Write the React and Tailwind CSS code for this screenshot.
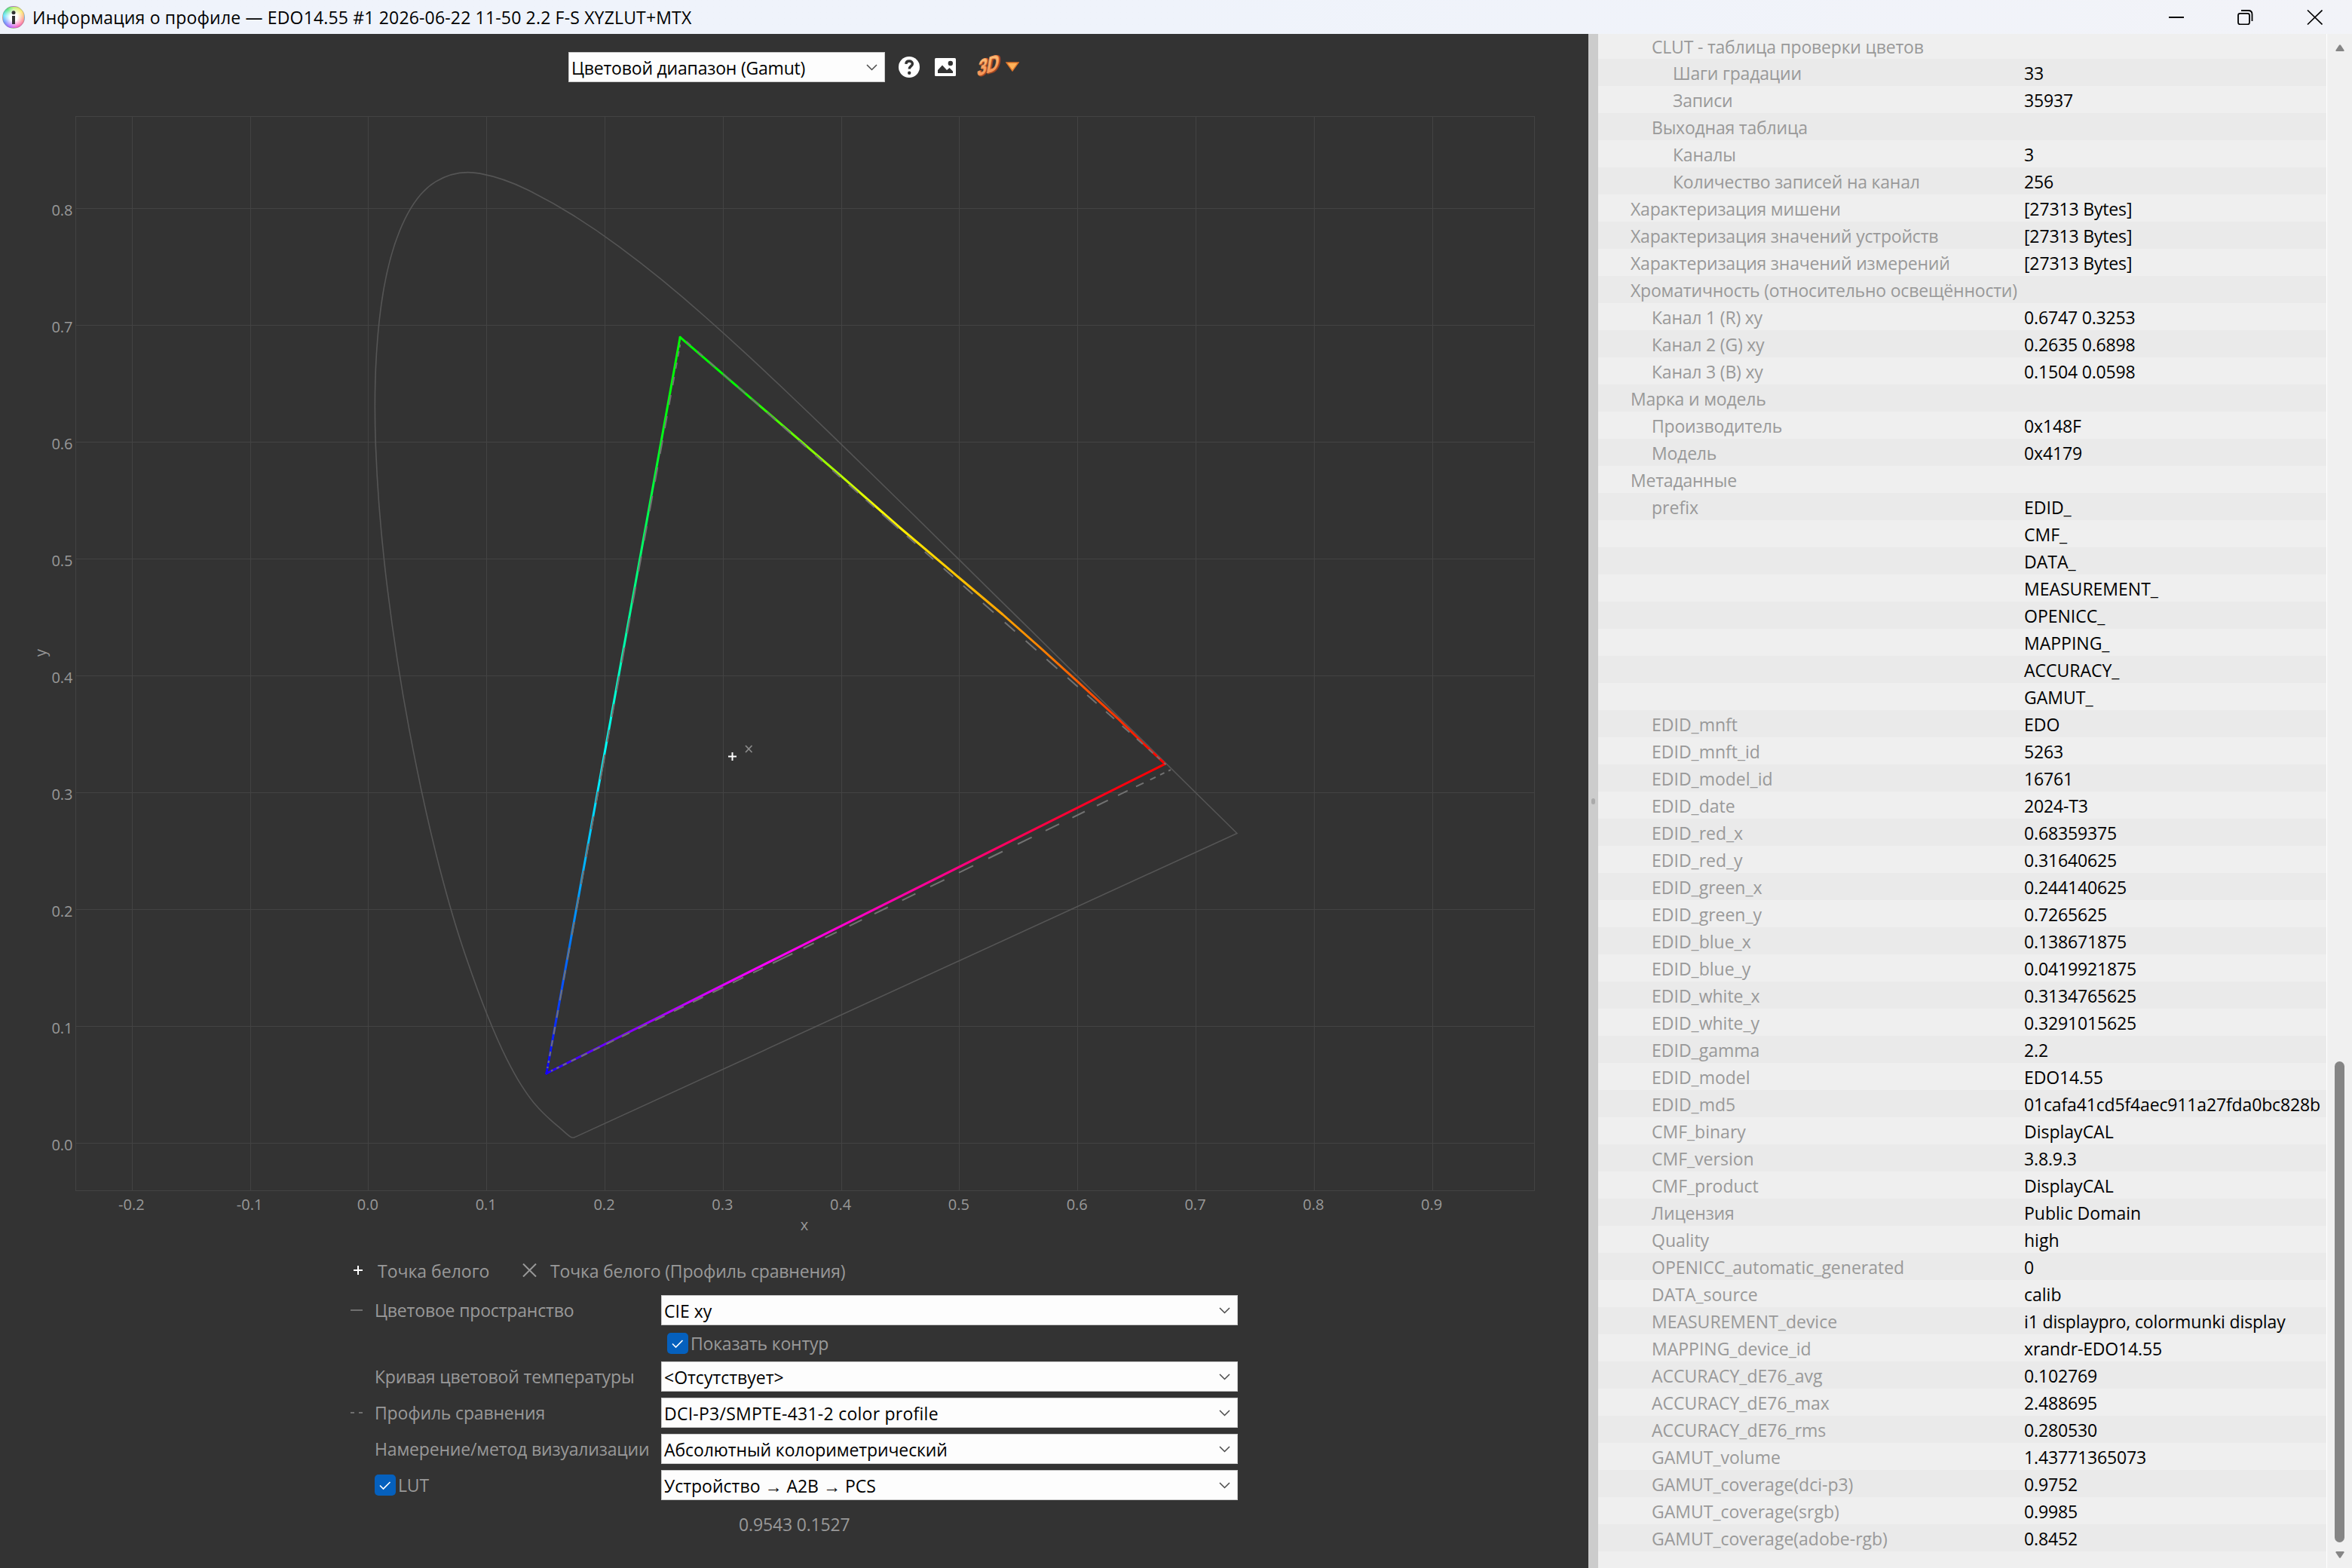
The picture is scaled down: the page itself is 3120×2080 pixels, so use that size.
import React from 'react'
import clsx from 'clsx'

const X0 = 488.9
const Y0 = 1516.6
const toX = (x) => X0 + x * 1568
const toY = (y) => Y0 - y * 1550

const LOCUS = [
  [0.1741, 0.005], [0.1733, 0.0048], [0.1714, 0.0051], [0.1689, 0.0069], [0.1644, 0.0109],
  [0.1566, 0.0177], [0.151, 0.0227], [0.144, 0.0297], [0.1355, 0.0399], [0.1241, 0.0578],
  [0.1096, 0.0868], [0.0913, 0.1327], [0.0687, 0.2007], [0.0454, 0.295], [0.0235, 0.4127],
  [0.0082, 0.5384], [0.0039, 0.6548], [0.0139, 0.7502], [0.0389, 0.812], [0.0743, 0.8338],
  [0.1142, 0.8262], [0.1547, 0.8059], [0.1929, 0.7816], [0.2296, 0.7543], [0.2658, 0.7243],
  [0.3016, 0.6923], [0.3373, 0.6589], [0.3731, 0.6245], [0.4087, 0.5896], [0.4441, 0.5547],
  [0.4788, 0.5202], [0.5125, 0.4866], [0.5448, 0.4544], [0.5752, 0.4242], [0.6029, 0.3965],
  [0.627, 0.3725], [0.6482, 0.3514], [0.6658, 0.334], [0.6915, 0.3083], [0.719, 0.2809],
  [0.7347, 0.2653],
]

// quadratic spline running through the midpoints of the samples
const locusPath = () => {
  const pts = LOCUS.map(([x, y]) => [toX(x), toY(y)])
  let d = `M${pts[0][0]} ${pts[0][1]}`
  for (let i = 1; i < pts.length - 1; i++) {
    const mx = (pts[i][0] + pts[i + 1][0]) / 2
    const my = (pts[i][1] + pts[i + 1][1]) / 2
    d += `Q${pts[i][0]} ${pts[i][1]} ${mx} ${my}`
  }
  const last = pts[pts.length - 1]
  return `${d}L${last[0]} ${last[1]}Z`
}

const X_TICKS = [-0.2, -0.1, 0, 0.1, 0.2, 0.3, 0.4, 0.5, 0.6, 0.7, 0.8, 0.9]
const Y_TICKS = [0, 0.1, 0.2, 0.3, 0.4, 0.5, 0.6, 0.7, 0.8]

const GREEN = [904, 447.3]
const RED = [1554, 1020.6]
const BLUE = [725, 1423.6]

// [start, end] of each dash along y
const GR_DASHES = [
  [453, 458], [466, 472], [480, 487], [496, 505], [513, 522], [529, 538], [547, 557], [565, 575],
  [584, 593], [604, 612], [624, 633], [643, 654], [663, 673], [682, 701], [711, 721], [732, 742],
  [754, 765], [777, 788], [800, 812.5], [825.5, 837.5], [850, 862.5], [874.5, 887], [899, 911],
  [922, 933], [944, 953.5], [963, 971.5], [980, 987], [994, 999], [1003.5, 1007], [1012, 1014],
]
const GB_DASHES = [
  [457, 461], [466, 473], [481, 489], [500, 511], [524, 537], [552, 568], [584, 602], [620, 639],
  [658, 678], [698, 717], [738, 758], [779, 800], [820, 840], [859, 879], [897, 916], [934, 951],
  [968, 984], [1001, 1034], [1050, 1065], [1083, 1100], [1119, 1137], [1155, 1173], [1190, 1207],
  [1223, 1240], [1257, 1273], [1287, 1300], [1313, 1327], [1340, 1350], [1362, 1372], [1380, 1388],
  [1395, 1401], [1407, 1410], [1415, 1417],
]
// these run along x
const RB_DASHES = [
  [1550, 1553], [1539, 1544.5], [1525.7, 1533], [1507, 1517], [1483, 1495.8], [1455, 1469.7],
  [1422.5, 1439], [1387, 1405], [1350, 1368.7], [1311, 1330], [1272, 1291], [1234, 1252.7],
  [1196.7, 1214.4], [1160, 1177.8], [1126.7, 1143.4], [1094.6, 1110], [1065.7, 1079.6],
  [1025, 1051.3], [999, 1012], [972, 986], [945.3, 959], [919, 932.5], [894, 907], [869, 881.5],
  [846.5, 858], [825, 835], [804.3, 814.3], [787, 795.5], [771, 778.8], [757.7, 763.8],
  [746.6, 751.6], [738.3, 741.6], [731, 733.3],
]

const alongY = (a, b, y) => a[0] + ((b[0] - a[0]) * (y - a[1])) / (b[1] - a[1])
const alongX = (a, b, x) => a[1] + ((b[1] - a[1]) * (x - a[0])) / (b[0] - a[0])

const dashPath = () =>
  [
    ...GR_DASHES.map(([s, e]) => `M${alongY(GREEN, RED, s)} ${s}L${alongY(GREEN, RED, e)} ${e}`),
    ...GB_DASHES.map(([s, e]) => `M${alongY(GREEN, BLUE, s)} ${s}L${alongY(GREEN, BLUE, e)} ${e}`),
    ...RB_DASHES.map(([s, e]) => `M${s} ${alongX(RED, BLUE, s)}L${e} ${alongX(RED, BLUE, e)}`),
  ].join('')

const Gradient = ({ id, from, to, stops }) => (
  <linearGradient id={id} gradientUnits="userSpaceOnUse" x1={from[0]} y1={from[1]} x2={to[0]} y2={to[1]}>
    {stops.map(([offset, color]) => (
      <stop key={offset} offset={offset} stopColor={color} />
    ))}
  </linearGradient>
)

const GamutChart = () => (
  <svg className="block h-[1541px] w-[2107px] shrink-0" viewBox="0 109 2107 1541">
    <defs>
      <Gradient id="gr" from={[902, 447]} to={[1545, 1013]} stops={[[0, '#00ff00'], [0.12, '#00ff00'], [0.41, '#ffff00'], [0.72, '#ff8c00'], [0.95, '#ff1800'], [1, '#ff0000']]} />
      <Gradient id="gb" from={[902, 447]} to={[725, 1424]} stops={[[0, '#00ff00'], [0.12, '#00ff10'], [0.35, '#00ff88'], [0.57, '#00ffff'], [0.8, '#0088ff'], [1, '#1000ff']]} />
      <Gradient id="rb" from={[1545, 1013]} to={[725, 1424]} stops={[[0, '#ff0000'], [0.08, '#ff0010'], [0.35, '#ff0088'], [0.64, '#ff00ff'], [0.75, '#d000ff'], [0.9, '#7000ff'], [1, '#2000ff']]} />
    </defs>
    <g stroke="#434343" strokeWidth="1" shapeRendering="crispEdges" fill="none">
      <rect x="100.5" y="154.5" width="1935" height="1424.5" />
      {X_TICKS.map((t) => (
        <path key={t} d={`M${toX(t)} 154.5V1579`} />
      ))}
      {Y_TICKS.map((t) => (
        <path key={t} d={`M100.5 ${toY(t)}H2035.5`} />
      ))}
    </g>
    <g className="fill-[#999999] font-['Open_Sans',sans-serif] text-[20px]">
      {X_TICKS.map((t) => (
        <text key={t} x={toX(t) - 1} y="1604.5" textAnchor="middle">{t.toFixed(1)}</text>
      ))}
      {Y_TICKS.map((t) => (
        <text key={t} x="96.500" y={toY(t) + 9} textAnchor="end">{t.toFixed(1)}</text>
      ))}
      <text x="1067" y="1632" textAnchor="middle">x</text>
      <text transform="translate(61 866) rotate(-90)" textAnchor="middle">y</text>
    </g>
    <path d={locusPath()} fill="none" stroke="#555555" strokeWidth="1.6" />
    <g fill="none" strokeWidth="3" strokeLinejoin="round" strokeLinecap="round">
      <path stroke="url(#rb)" d="M1545.5 1013.4L724.9 1423.9" />
      <path stroke="url(#gb)" d="M902.2 447.3L724.9 1423.9" />
      <path
        stroke="url(#gr)"
        d="M902.2 447.3L971.6 507.1L1001.5 532.8L1116.3 631.8L1192.6 699L1272.4 766.5L1330 815L1380.3 859.5L1429.7 904.3L1483.7 954L1520 989.5L1545.5 1013.4"
      />
    </g>
    <path d={dashPath()} fill="none" stroke="#727272" strokeWidth="2" />
    <path d="M971.5 998V1009M966 1003.5H977" stroke="#ffffff" strokeWidth="2" />
    <path d="M989 989L997.500 998M997.500 989L989 998" stroke="#8a8a8a" strokeWidth="1.8" />
  </svg>
)

const Combo = ({ value, className }) => (
  <div
    className={clsx(
      'flex h-10 items-center justify-between border border-[#c9c9c9] bg-[#fdfdfd] pl-[3px] pr-[9px] text-black',
      className,
    )}
  >
    <span className="pt-[2px]">{value}</span>
    <svg className="h-[9px] w-[15px]" viewBox="0 0 15 9" fill="none" stroke="#4a4a4a" strokeWidth="1.5">
      <path d="M1 1L7.500 7.500L14 1" />
    </svg>
  </div>
)

const CheckBox = ({ label }) => (
  <div className="flex items-center gap-[3px]">
    <svg className="h-7 w-7" viewBox="0 0 28 28">
      <rect width="28" height="28" rx="5" fill="#0560bd" />
      <path d="M7 14.5L11.500 19L20.500 10" fill="none" stroke="#ffffff" strokeWidth="1.6" />
    </svg>
    <span>{label}</span>
  </div>
)

const FormRow = ({ marker, label, children }) => (
  <div className="flex h-10 items-center">
    <div className="flex w-[32px] gap-1">{marker}</div>
    <div className="w-[380px] whitespace-nowrap tracking-[-0.17px]">{label}</div>
    {children}
  </div>
)

const Toolbar = () => (
  <div className="flex h-16 shrink-0 items-end pl-[754px]">
    <Combo value="Цветовой диапазон (Gamut)" className="w-[420px] tracking-[-0.2px]" />
    <svg className="ml-[18px] mb-[6px] h-7 w-7" viewBox="0 0 28 28">
      <circle cx="14" cy="14" r="14" fill="#ffffff" />
      <path d="M9.800 9.800C10 7 12 6 14.200 6C16.600 6 18.400 7.500 18.400 9.700C18.400 12.600 14.300 12.800 14.300 16.500" fill="none" stroke="#333333" strokeWidth="3.4" />
      <circle cx="14.200" cy="21.800" r="2.200" fill="#333333" />
    </svg>
    <svg className="ml-5 mb-2 h-6 w-7" viewBox="0 0 28 24">
      <rect width="28" height="24" rx="1.500" fill="#ffffff" />
      <circle cx="20.800" cy="7" r="3.200" fill="#333333" />
      <path d="M4 20V16L10 9.500L16 16L19.500 13L24 17.500V20Z" fill="#333333" />
    </svg>
    <svg className="ml-[26px] mb-[4px] h-[34px] w-[34px] overflow-visible" viewBox="0 0 34 34">
      <defs>
        <linearGradient id="three" x1="0" y1="0" x2="0" y2="1">
          <stop offset="0" stopColor="#ffd083" />
          <stop offset="1" stopColor="#f5854a" />
        </linearGradient>
      </defs>
      <g
        className="font-['Liberation_Sans',sans-serif] text-[29px] font-bold"
        strokeLinejoin="round"
        transform="translate(1.500 30) skewY(-17) skewX(-10) scale(.76 1)"
      >
        <text x="2" y="1" fill="#9c4a22" stroke="#9c4a22" strokeWidth="2.400">3D</text>
        <text x="0" y="0" fill="url(#three)" stroke="#f2935a" strokeWidth="1">3D</text>
      </g>
    </svg>
    <svg className="ml-[6px] mb-[14px] h-[13px] w-[18px]" viewBox="0 0 18 13">
      <path d="M1 1H17L9 12Z" fill="#ffb35a" stroke="#e0752a" strokeWidth="1.400" />
    </svg>
  </div>
)

const Controls = () => (
  <div className="pl-[465px] text-[#999999]">
    <div className="flex h-[68px] items-center pt-[3px] tracking-[-0.17px]">
      <svg className="mb-[2px] ml-1 h-3 w-3" viewBox="0 0 12 12" stroke="#ffffff" strokeWidth="2">
        <path d="M6 0V12M0 6H12" />
      </svg>
      <span className="ml-[20px] w-[192px] tracking-normal">Точка белого</span>
      <svg className="mb-[2px] h-[18px] w-[19px]" viewBox="0 0 19 18" stroke="#999999" strokeWidth="2">
        <path d="M1 0.500L18 17.500M18 0.500L1 17.500" />
      </svg>
      <span className="ml-[18px]">Точка белого (Профиль сравнения)</span>
    </div>
    <FormRow marker={<i className="h-[2px] w-4 bg-[#6f6f6f]" />} label="Цветовое пространство">
      <Combo value="CIE xy" className="w-[765px]" />
    </FormRow>
    <div className="flex h-12 items-center pl-[420px] tracking-[-0.2px]">
      <CheckBox label="Показать контур" />
    </div>
    <div className="flex flex-col gap-2">
      <FormRow label="Кривая цветовой температуры">
        <Combo value="<Отсутствует>" className="w-[765px]" />
      </FormRow>
      <FormRow
        marker={<><i className="h-[2px] w-[5px] bg-[#6f6f6f]" /><i className="ml-[2px] h-[2px] w-[5px] bg-[#6f6f6f]" /></>}
        label="Профиль сравнения"
      >
        <Combo value="DCI-P3/SMPTE-431-2 color profile" className="w-[765px] tracking-[0.25px]" />
      </FormRow>
      <FormRow label="Намерение/метод визуализации">
        <Combo value="Абсолютный колориметрический" className="w-[765px] tracking-[-0.1px]" />
      </FormRow>
      <FormRow label={<CheckBox label="LUT" />}>
        <Combo value="Устройство → A2B → PCS" className="w-[765px]" />
      </FormRow>
    </div>
    <div className="mt-4 pl-[515px] tracking-[-0.15px]">0.9543 0.1527</div>
  </div>
)

// [indent level, label, value]
const ROWS = [
  [1, 'CLUT - таблица проверки цветов', ''],
  [2, 'Шаги градации', '33'],
  [2, 'Записи', '35937'],
  [1, 'Выходная таблица', ''],
  [2, 'Каналы', '3'],
  [2, 'Количество записей на канал', '256'],
  [0, 'Характеризация мишени', '[27313 Bytes]'],
  [0, 'Характеризация значений устройств', '[27313 Bytes]'],
  [0, 'Характеризация значений измерений', '[27313 Bytes]'],
  [0, 'Хроматичность (относительно освещённости)', ''],
  [1, 'Канал 1 (R) xy', '0.6747 0.3253'],
  [1, 'Канал 2 (G) xy', '0.2635 0.6898'],
  [1, 'Канал 3 (B) xy', '0.1504 0.0598'],
  [0, 'Марка и модель', ''],
  [1, 'Производитель', '0x148F'],
  [1, 'Модель', '0x4179'],
  [0, 'Метаданные', ''],
  [1, 'prefix', 'EDID_'],
  [1, '', 'CMF_'],
  [1, '', 'DATA_'],
  [1, '', 'MEASUREMENT_'],
  [1, '', 'OPENICC_'],
  [1, '', 'MAPPING_'],
  [1, '', 'ACCURACY_'],
  [1, '', 'GAMUT_'],
  [1, 'EDID_mnft', 'EDO'],
  [1, 'EDID_mnft_id', '5263'],
  [1, 'EDID_model_id', '16761'],
  [1, 'EDID_date', '2024-T3'],
  [1, 'EDID_red_x', '0.68359375'],
  [1, 'EDID_red_y', '0.31640625'],
  [1, 'EDID_green_x', '0.244140625'],
  [1, 'EDID_green_y', '0.7265625'],
  [1, 'EDID_blue_x', '0.138671875'],
  [1, 'EDID_blue_y', '0.0419921875'],
  [1, 'EDID_white_x', '0.3134765625'],
  [1, 'EDID_white_y', '0.3291015625'],
  [1, 'EDID_gamma', '2.2'],
  [1, 'EDID_model', 'EDO14.55'],
  [1, 'EDID_md5', '01cafa41cd5f4aec911a27fda0bc828b'],
  [1, 'CMF_binary', 'DisplayCAL'],
  [1, 'CMF_version', '3.8.9.3'],
  [1, 'CMF_product', 'DisplayCAL'],
  [1, 'Лицензия', 'Public Domain'],
  [1, 'Quality', 'high'],
  [1, 'OPENICC_automatic_generated', '0'],
  [1, 'DATA_source', 'calib'],
  [1, 'MEASUREMENT_device', 'i1 displaypro, colormunki display'],
  [1, 'MAPPING_device_id', 'xrandr-EDO14.55'],
  [1, 'ACCURACY_dE76_avg', '0.102769'],
  [1, 'ACCURACY_dE76_max', '2.488695'],
  [1, 'ACCURACY_dE76_rms', '0.280530'],
  [1, 'GAMUT_volume', '1.43771365073'],
  [1, 'GAMUT_coverage(dci-p3)', '0.9752'],
  [1, 'GAMUT_coverage(srgb)', '0.9985'],
  [1, 'GAMUT_coverage(adobe-rgb)', '0.8452'],
]

const INDENT = ['pl-[43px]', 'pl-[71px]', 'pl-[99px]']

const ProfileTable = () => (
  <div className="flex w-[966px] flex-col justify-end bg-[#efefef] pb-[22px]">
    {ROWS.map(([level, label, value], i) => (
      <div
        key={i}
        className={clsx(
          'flex items-center whitespace-nowrap pt-[1px]',
          i === 0 ? 'h-[33px] pb-[1px]' : 'h-9',
          i % 2 === 1 && 'bg-[#eaeaea]',
        )}
      >
        <div className={clsx('w-[565px] text-[#999999]', INDENT[level], /[а-я]/.test(label) && 'tracking-[-0.2px]')}>
          {label}
        </div>
        <div className={clsx('text-black', /\d/.test(value) && 'tracking-[-0.15px]')}>{value}</div>
      </div>
    ))}
  </div>
)

const ScrollBar = () => (
  <div className="flex w-[34px] flex-col items-center border-l border-white bg-[#f0f0f0] pt-[14px] pb-[12px]">
    <svg className="h-[10px] w-[12px]" viewBox="0 0 12 10">
      <path d="M5 0.800Q6 -0.300 7 0.800L11.500 7.500Q12 9 10.800 9H1.200Q0 9 0.500 7.500Z" fill="#858585" />
    </svg>
    <div className="mt-auto h-[638px] w-[13px] rounded-full bg-[#858585]" />
    <svg className="mt-[12px] h-[10px] w-[12px]" viewBox="0 0 12 10">
      <path d="M5 8.200Q6 9.300 7 8.200L11.500 1.500Q12 0 10.800 0H1.200Q0 0 0.500 1.500Z" fill="#858585" />
    </svg>
  </div>
)

const TitleBar = () => (
  <div className="flex h-[45px] shrink-0 items-center bg-gradient-to-r from-[#eff3fb] via-[#eff3fb] to-[#f2f3f8] pl-[3px] pr-[39px]">
    <div className="flex size-[30px] items-center justify-center rounded-full border border-[#8b8b9b]/50 bg-[radial-gradient(circle,#ffffff_25%,#ffffff00_75%),conic-gradient(#b0f060,#ffe860_15%,#ff9080_28%,#ff50b0_42%,#b050ff_55%,#6080ff_66%,#50e0ff_78%,#40e070_90%,#b0f060)]">
      <svg className="h-[18px] w-2" viewBox="0 0 8 18" fill="#333333">
        <circle cx="4" cy="2.800" r="2.500" />
        <path d="M2 7H6V18H2Z" />
      </svg>
    </div>
    <span className="ml-[10px] whitespace-nowrap pt-[1px] tracking-[0.17px] text-black">
      Информация о профиле — EDO14.55 #1 2026-06-22 11-50 2.2 F-S XYZLUT+MTX
    </span>
    <svg className="ml-auto h-5 w-[204px]" viewBox="0 0 204 20" fill="none" stroke="#000000" strokeWidth="1.800">
      <path d="M0 10H20" strokeWidth="2" />
      <rect x="92" y="4.800" width="15" height="14.500" rx="2.500" />
      <path d="M96 1H105.500Q110.500 1 110.500 6V15" />
      <path d="M184 0.500L203.500 19.500M203.500 0.500L184 19.500" strokeWidth="1.600" />
    </svg>
  </div>
)

const App = () => (
  <div className="flex h-[2080px] w-[3120px] flex-col overflow-hidden bg-[#333333] font-['Open_Sans',sans-serif] text-[23px] leading-8">
    <TitleBar />
    <div className="flex min-h-0 flex-1">
      <div className="flex w-[2107px] flex-col">
        <Toolbar />
        <GamutChart />
        <Controls />
      </div>
      <div className="flex w-[13px] items-center justify-center bg-[#cccccc]">
        <div className="h-2 w-[5px] rounded-full bg-[#aaaaaa]" />
      </div>
      <ProfileTable />
      <ScrollBar />
    </div>
  </div>
)

export default App
